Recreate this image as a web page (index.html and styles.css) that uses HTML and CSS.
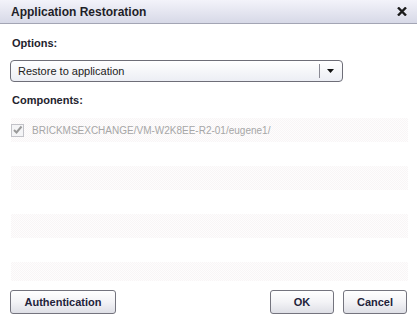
FILE: index.html
```html
<!DOCTYPE html>
<html>
<head>
<meta charset="utf-8">
<link rel="stylesheet" href="styles.css">
</head>
<body>
<div class="dialog">
  <div class="titlebar">
    <span class="title">Application Restoration</span>
    <svg class="close" width="10" height="9" viewBox="0 0 10 9"><path d="M1 0.5 L9 8.5 M9 0.5 L1 8.5" stroke="#1a1a1a" stroke-width="2.4"/></svg>
  </div>
  <div class="body">
    <div class="label">Options:</div>
    <div class="select">
      <span class="select-text">Restore to application</span>
      <span class="select-div"></span>
      <svg class="arrow" width="7" height="4" viewBox="0 0 7 4"><path d="M0 0 H7 L3.5 4 Z" fill="#111"/></svg>
    </div>
    <div class="label comp">Components:</div>
    <div class="list">
      <div class="row alt">
        <span class="check"><svg width="11" height="10" viewBox="0 0 11 10"><path d="M2 5 L4.5 7.5 L9.5 1.5" fill="none" stroke="#9a9a9a" stroke-width="2"/></svg></span>
        <span class="item">BRICKMSEXCHANGE/VM-W2K8EE-R2-01/eugene1/</span>
      </div>
      <div class="row"></div>
      <div class="row alt"></div>
      <div class="row"></div>
      <div class="row alt"></div>
      <div class="row"></div>
      <div class="row alt last"></div>
    </div>
    <div class="buttons">
      <button class="btn auth">Authentication</button>
      <div class="right">
        <button class="btn ok">OK</button>
        <button class="btn cancel">Cancel</button>
      </div>
    </div>
  </div>
</div>
</body>
</html>
```
FILE: styles.css
```css
html, body {
  margin: 0;
  padding: 0;
  background: #ffffff;
}
.dialog {
  width: 417px;
  height: 322px;
  font-family: "Liberation Sans", sans-serif;
  color: #222;
  overflow: hidden;
}
.titlebar {
  height: 23px;
  border-bottom: 1px solid #a3a5b4;
  background: linear-gradient(#f3f3fa, #d7d9e7);
  display: flex;
  align-items: center;
  justify-content: space-between;
  padding: 0 10px 0 11px;
}
.title {
  font-family: "Liberation Sans", sans-serif;
  font-weight: bold;
  font-size: 12px;
  color: #1e1e28;
}
.close {
  display: block;
}
.body {
  padding: 0 10px 0 10px;
}
.label {
  font-family: "Liberation Sans", sans-serif;
  font-weight: bold;
  font-size: 11px;
  color: #23232d;
  padding: 13px 0 0 2px;
  height: 13px;
  line-height: 13px;
}
.select {
  margin-top: 10px;
  width: 333px;
  height: 22px;
  box-sizing: border-box;
  border: 1px solid #6e6e78;
  border-radius: 4px;
  background: linear-gradient(#ffffff, #eceef4);
  display: flex;
  align-items: center;
  font-family: "Liberation Sans", sans-serif;
  font-size: 11px;
  color: #222;
}
.select-text {
  flex: 1;
  padding-left: 7px;
}
.select-div {
  width: 1px;
  height: 14px;
  background: #8a8a94;
}
.arrow {
  margin: 0 8px 0 7px;
  display: block;
}
.comp {
  padding-top: 12px;
}
.list {
  margin-top: 11px;
  margin-left: 1px;
  width: 397px;
}
.row {
  height: 24px;
  display: flex;
  align-items: center;
}
.row.last {
  height: 19px;
}
.alt {
  background-color: #fcfafb;
  background-image: repeating-conic-gradient(#f8f5f6 0% 25%, #fefdfd 0% 50%);
  background-size: 2px 2px;
}
.check {
  width: 13px;
  height: 13px;
  box-sizing: border-box;
  border: 1px solid #c2c2c8;
  background: #f4f4f6;
  display: flex;
  align-items: center;
  justify-content: center;
}
.item {
  margin-left: 8px;
  font-family: "Liberation Sans", sans-serif;
  font-size: 10px;
  color: #a6a6a6;
}
.buttons {
  margin-top: 9px;
  display: flex;
  justify-content: space-between;
}
.right {
  display: flex;
  gap: 9px;
}
.btn {
  height: 24px;
  box-sizing: border-box;
  border: 1px solid #74747e;
  border-radius: 3px;
  background: linear-gradient(#ffffff 0%, #f3f3f6 50%, #dedfe6 100%);
  font-family: "Liberation Sans", sans-serif;
  font-weight: bold;
  font-size: 11px;
  color: #23233a;
  padding: 0;
  margin: 0;
}
.auth { width: 106px; }
.ok { width: 64px; }
.cancel { width: 64px; }
```
